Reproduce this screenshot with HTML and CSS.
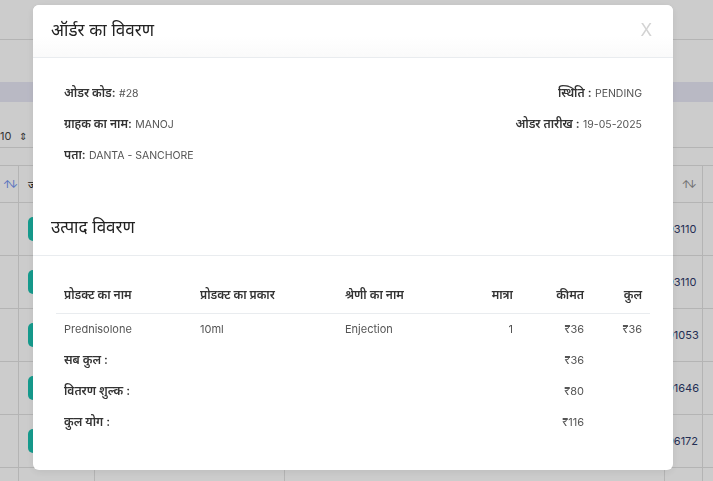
FILE: index.html
```html
<!DOCTYPE html>
<html lang="hi">
<head>
<meta charset="utf-8">
<title>ऑर्डर का विवरण</title>
<link rel="stylesheet" href="styles.css">
</head>
<body>
<div class="page">
  <div class="topbar"></div>
  <div class="gap"></div>
  <div class="band"></div>
  <div class="controls"><span class="len">10 <span class="spin">&#8661;</span></span></div>
  <div class="bg-table">
    <div class="bg-row head">
      <div class="c c1"><span class="sort">&uarr;&darr;</span></div>
      <div class="c c2">ज</div>
      <div class="c c3"></div>
      <div class="c c4"></div>
      <div class="c c5">र <span class="sort grey">&uarr;&darr;</span></div>
      <div class="c c6"></div>
    </div>
    <div class="bg-row"><div class="c c1"></div><div class="c c2"><span class="tbtn"></span></div><div class="c c3"></div><div class="c c4"></div><div class="c c5 num">93110</div><div class="c c6"></div></div>
    <div class="bg-row"><div class="c c1"></div><div class="c c2"><span class="tbtn"></span></div><div class="c c3"></div><div class="c c4"></div><div class="c c5 num">93110</div><div class="c c6"></div></div>
    <div class="bg-row"><div class="c c1"></div><div class="c c2"><span class="tbtn"></span></div><div class="c c3"></div><div class="c c4"></div><div class="c c5 num">91053</div><div class="c c6"></div></div>
    <div class="bg-row"><div class="c c1"></div><div class="c c2"><span class="tbtn"></span></div><div class="c c3"></div><div class="c c4"></div><div class="c c5 num">91646</div><div class="c c6"></div></div>
    <div class="bg-row"><div class="c c1"></div><div class="c c2"><span class="tbtn"></span></div><div class="c c3"></div><div class="c c4"></div><div class="c c5 num">96172</div><div class="c c6"></div></div>
    <div class="bg-row"><div class="c c1"></div><div class="c c2"><span class="tbtn"></span></div><div class="c c3"><span class="ybtn"></span></div><div class="c c4"></div><div class="c c5"></div><div class="c c6"></div></div>
  </div>
</div>

<div class="overlay">
  <div class="modal">
    <div class="modal-header">
      <h4 class="modal-title">ऑर्डर का विवरण</h4>
      <span class="close">X</span>
    </div>
    <div class="info">
      <div class="info-row">
        <div><b>ओडर कोड:</b> <span class="val">#28</span></div>
        <div><b>स्थिति :</b> <span class="val">PENDING</span></div>
      </div>
      <div class="info-row">
        <div><b>ग्राहक का नाम:</b> <span class="val">MANOJ</span></div>
        <div><b>ओडर तारीख :</b> <span class="val">19-05-2025</span></div>
      </div>
      <div class="info-row">
        <div><b>पता:</b> <span class="val">DANTA - SANCHORE</span></div>
      </div>
    </div>
    <div class="section-head">
      <h4 class="modal-title">उत्पाद विवरण</h4>
    </div>
    <div class="products">
      <table class="ptable">
        <colgroup>
          <col class="w1"><col class="w2"><col class="w3"><col class="w4"><col class="w5"><col class="w6">
        </colgroup>
        <thead>
          <tr>
            <th>प्रोडक्ट का नाम</th>
            <th>प्रोडक्ट का प्रकार</th>
            <th>श्रेणी का नाम</th>
            <th class="r">मात्रा</th>
            <th class="r">कीमत</th>
            <th class="r">कुल</th>
          </tr>
        </thead>
        <tbody>
          <tr>
            <td>Prednisolone</td>
            <td>10ml</td>
            <td>Enjection</td>
            <td class="r">1</td>
            <td class="r">₹36</td>
            <td class="r">₹36</td>
          </tr>
          <tr class="tot">
            <td><b>सब कुल :</b></td><td></td><td></td><td></td><td class="r">₹36</td><td></td>
          </tr>
          <tr class="tot">
            <td colspan="2"><b>वितरण शुल्क :</b></td><td></td><td></td><td class="r">₹80</td><td></td>
          </tr>
          <tr class="tot">
            <td><b>कुल योग :</b></td><td></td><td></td><td></td><td class="r">₹116</td><td></td>
          </tr>
        </tbody>
      </table>
    </div>
  </div>
</div>
</body>
</html>
```

FILE: styles.css
```css
* { box-sizing: border-box; }
html, body { margin: 0; padding: 0; }
body {
  width: 713px;
  height: 481px;
  overflow: hidden;
  background: #ffffff;
  font-family: "Inter", "Noto Sans", "Noto Sans Devanagari", sans-serif;
  color: #333;
}

/* ---------- background page ---------- */
.page { width: 713px; height: 481px; overflow: hidden; background: #fff; }
.topbar { height: 40px; border-bottom: 1px solid #e2e2e2; }
.gap { height: 42px; }
.band { height: 20px; background: #e8e8f6; }
.controls {
  height: 46px;
  border-top: 1px solid #fff;
  border-bottom: 1px solid #e2e2e2;
  display: flex;
  align-items: center;
  padding-top: 22px;
  font-size: 11px;
  color: #444;
}
.len { display: flex; gap: 8px; align-items: center; }
.spin { font-size: 10px; }
.bg-table { border-top: 1px solid #e2e2e2; margin-top: 17px; }
.bg-row { display: flex; height: 53px; border-bottom: 1px solid #e2e2e2; }
.bg-row.head { height: 37px; }
.c { border-right: 1px solid #e2e2e2; display: flex; align-items: center; font-size: 11px; color: #3a4470; }
.c1 { width: 19px; justify-content: center; }
.c2 { width: 76px; padding-left: 9px; color: #222; }
.c3 { width: 190px; padding-left: 12px; }
.c4 { width: 380px; }
.c5 { width: 38px; justify-content: flex-start; padding-left: 2px; white-space: nowrap; overflow: hidden; }
.c6 { flex: 1; border-right: none; }
.num { color: #2e3a6a; }
.sort { color: #6d8ff0; font-size: 11px; letter-spacing: -3px; }
.sort.grey { color: #888; margin-left: 10px; }
.tbtn { display: block; width: 40px; height: 24px; background: #1bc2b1; border-radius: 5px; }
.ybtn { display: block; width: 98px; height: 30px; background: #f4bb0c; border-radius: 4px; margin-top: 44px; }

/* ---------- overlay + modal ---------- */
.overlay {
  position: fixed;
  inset: 0;
  background: rgba(0, 0, 0, 0.2);
}
.modal {
  position: absolute;
  left: 33px;
  top: 5px;
  width: 640px;
  height: 465px;
  background: #fff;
  border-radius: 6px;
  box-shadow: 0 2px 8px rgba(0, 0, 0, 0.08);
  overflow: hidden;
}
.modal-header {
  height: 53px;
  border-bottom: 1px solid #e9ecef;
  display: flex;
  align-items: center;
  justify-content: space-between;
  padding: 0 18px 3px;
  background: linear-gradient(#ffffff, #ffffff 60%, #fafafa);
}
.modal-title {
  margin: 0;
  font-size: 17px;
  font-weight: 400;
  color: #222;
}
.close {
  font-size: 17px;
  color: #d3d3d3;
  margin-right: 3px;
}

.info { padding: 19px 31px 0 31px; height: 143px; }
.info-row {
  display: flex;
  justify-content: space-between;
  height: 31px;
  align-items: center;
  font-size: 12px;
}
.info-row b { font-weight: 600; color: #333; }
.val { color: #555; font-weight: 400; font-size: 10.5px; }

.section-head {
  height: 55px;
  border-bottom: 1px solid #e9ecef;
  display: flex;
  align-items: center;
  padding: 0 18px 3px;
}

.products { padding: 21px 23px 0 23px; }
.ptable { width: 594px; border-collapse: collapse; table-layout: fixed; font-size: 11px; }
.w1 { width: 136px; } .w2 { width: 145px; } .w3 { width: 118px; }
.w4 { width: 66px; } .w5 { width: 71px; } .w6 { width: 58px; }
.ptable th {
  text-align: left;
  font-weight: 600;
  color: #333;
  padding: 0 8px;
  height: 36px;
  border-bottom: 1px solid #e9ecef;
  font-size: 12px;
}
.ptable td { padding: 0 8px; height: 31px; color: #555; white-space: nowrap; }
.ptable td b { font-weight: 600; color: #333; font-size: 12px; }
.ptable .r { text-align: right; }
```
